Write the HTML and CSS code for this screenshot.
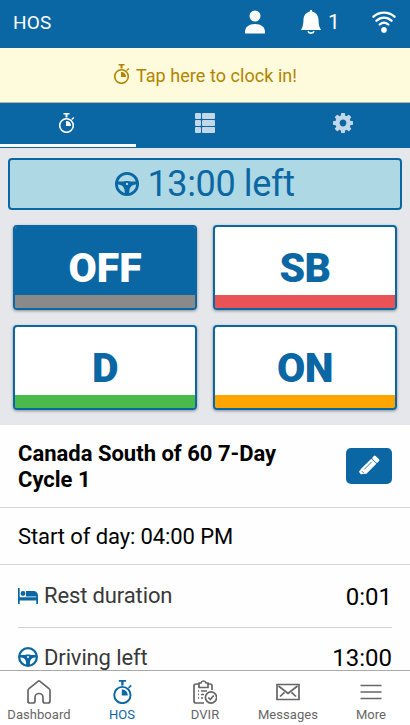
FILE: index.html
```html
<!DOCTYPE html>
<html lang="en">
<head>
<meta charset="utf-8">
<title>HOS</title>
<link rel="stylesheet" href="styles.css">
</head>
<body>
<svg class="defs" aria-hidden="true">
  <symbol id="stopwatch" viewBox="0 0 18 20">
    <circle cx="8.500" cy="12.500" r="6.800" fill="none" stroke="currentColor" stroke-width="1.600"/>
    <path d="M5.500 0h6v1.500h-2v3h-2v-3h-2zM13.200 6l2.200-2 .9 1-2.200 2zM8 8a4.500 4.500 0 0 1 5 5H8z" fill="currentColor"/>
  </symbol>
  <symbol id="wheel" viewBox="0 0 24 24">
    <circle cx="12" cy="12" r="10.600" fill="none" stroke="currentColor" stroke-width="2.800"/>
    <path fill="currentColor" fill-rule="evenodd" d="M2 9.500h6.500C9.500 8.800 14.500 8.800 15.500 9.500H22v2.700l-3.500.8c-2.500.8-4 3-4.200 6V22H9.700v-3c-.2-3-1.700-5.200-4.200-6L2 12.200zM12 10.700a1.200 1.200 0 1 0 0 2.400 1.200 1.200 0 0 0 0-2.400z"/>
  </symbol>
</svg>
<div class="app">
  <header class="topbar">
    <span class="title">HOS</span>
    <svg class="person" viewBox="0 0 20 24" fill="#fff"><circle cx="10" cy="6" r="5.5"/><path d="M0 23.500V22c0-5 4-8 10-8s10 3 10 8v1.500z"/></svg>
    <span class="alerts">
      <svg class="bell" viewBox="0 0 20 24" fill="#fff"><path d="M10 0c.9 0 1.300.6 1.300 1.700C15 2.400 17.300 5.400 17.500 9.500c.2 4.500.5 6.500 1.500 8.500l1 2H0L1 18c1-2 1.300-4 1.500-8.500.2-4.100 2.500-7.100 6.200-7.800C8.700.6 9.100 0 10 0z"/><path d="M7 21.200c.7 2.500 5.300 2.500 6 0" fill="none" stroke="#fff" stroke-width="1.600"/></svg>
      <span>1</span>
    </span>
    <svg class="wifi" viewBox="0 0 24 22" fill="none" stroke="#fff" stroke-width="2.300" stroke-linecap="round"><path d="M1.500 5.700c6-5.400 15-5.400 21 0M4.500 9.700c4.500-4.100 10.500-4.100 15 0M7.700 13.500c2.700-2.400 5.900-2.400 8.600 0"/><circle cx="12" cy="18.900" r="2.800" fill="#fff" stroke="none"/></svg>
  </header>

  <div class="clockin"><svg><use href="#stopwatch"/></svg><span>Tap here to clock in!</span></div>

  <nav class="tabs">
    <div class="tab active"><svg class="tab-watch"><use href="#stopwatch"/></svg></div>
    <div class="tab"><svg class="tab-list" viewBox="0 0 20 20" fill="currentColor"><rect width="6" height="6" rx="1"/><rect y="7" width="6" height="6" rx="1"/><rect y="14" width="6" height="6" rx="1"/><rect x="7" width="13" height="6" rx="1"/><rect x="7" y="7" width="13" height="6" rx="1"/><rect x="7" y="14" width="13" height="6" rx="1"/></svg></div>
    <div class="tab"><svg class="tab-gear" viewBox="-10 -10 20 20"><circle r="5.600" fill="none" stroke="currentColor" stroke-width="4.400"/><g fill="currentColor"><rect x="-2" y="-10" width="4" height="4" rx=".7"/><rect x="-2" y="6" width="4" height="4" rx=".7"/><rect x="-10" y="-2" width="4" height="4" rx=".7"/><rect x="6" y="-2" width="4" height="4" rx=".7"/><g transform="rotate(45)"><rect x="-2" y="-10" width="4" height="4" rx=".7"/><rect x="-2" y="6" width="4" height="4" rx=".7"/><rect x="-10" y="-2" width="4" height="4" rx=".7"/><rect x="6" y="-2" width="4" height="4" rx=".7"/></g></g></svg></div>
  </nav>

  <section class="status">
    <div class="remaining"><svg><use href="#wheel"/></svg><span>13:00 left</span></div>
    <div class="duties">
      <button class="duty off">OFF</button>
      <button class="duty sb">SB</button>
      <button class="duty d">D</button>
      <button class="duty on">ON</button>
    </div>
  </section>

  <main class="details">
    <div class="cycle">
      <h1>Canada South of 60 7-Day Cycle 1</h1>
      <button class="edit" aria-label="Edit"><svg viewBox="0 0 22 22"><g transform="translate(10.500 11.500) rotate(45)"><path d="M-3.600-7.500V6.500L-3 10.500 0 11 3.600 6.500v-14z" fill="#fff"/><rect x="-3.600" y="-12.500" width="7.200" height="4.300" rx="1.200" fill="#fff"/><path d="M-1-5.500V5M-1.500 8h3" stroke="#0b67a4" stroke-width=".8"/></g></svg></button>
    </div>
    <div class="start">Start of day: 04:00 PM</div>
    <div class="timers">
      <div class="timer">
        <svg class="bed" viewBox="0 0 20 16" fill="currentColor"><path d="M0 0h1.700v9.300h16.600V8H20v8h-1.700v-3.500H1.700V16H0z"/><circle cx="5" cy="5.500" r="2.400"/><path d="M8 3h7.500A4.500 4.500 0 0 1 20 7.500v1H8z"/></svg>
        <span class="label">Rest duration</span><span class="value">0:01</span>
      </div>
      <div class="timer">
        <svg class="wheel"><use href="#wheel"/></svg>
        <span class="label">Driving left</span><span class="value">13:00</span>
      </div>
    </div>
  </main>

  <nav class="bottom">
    <div class="item dashboard"><svg viewBox="0 0 24 24" class="icon"><path d="M1 23V10.500Q1 9.500 2 8.700L11 1.300q1-.8 2 0l9 7.400q1 .8 1 1.800V21q0 2-2 2h-3q-2 0-2-2v-3.500a4 4 0 0 0-8 0V21q0 2-2 2H3q-2 0-2-2"/></svg><span>Dashboard</span></div>
    <div class="item current"><svg class="icon"><use href="#stopwatch"/></svg><span>HOS</span></div>
    <div class="item"><svg viewBox="0 0 24 24" class="icon"><path d="M11 23H3q-2 0-2-2V6q0-2 2-2h3V3h2q.5-2 2.500-2T13 3h2v1h2q2 0 2 2v4M6 4v3.500h9V4M5 11h1m2 0h6M5 14.500h1m2 0h3M5 18h1m2 0h2"/><circle cx="18" cy="17.500" r="5.600"/><path d="m15.300 17.500 2 2 3.400-4"/></svg><span>DVIR</span></div>
    <div class="item"><svg viewBox="0 0 24 24" class="icon"><path d="M1 4.500h22v15H1zM2.500 6l9.500 7.500L21.500 6M4 16.500l4.500-4.200M20 16.500l-4.500-4.200"/></svg><span>Messages</span></div>
    <div class="item"><svg viewBox="0 0 24 24" class="icon"><path d="M1.500 5.500h21M1.500 12h21M1.500 18.500h21"/></svg><span>More</span></div>
  </nav>
</div>
</body>
</html>
```
FILE: styles.css
```css
* { box-sizing: border-box; }
body { margin: 0; font-family: Roboto, "Liberation Sans", sans-serif; color: #000; }
svg { display: block; flex: none; }
button { font-family: inherit; padding: 0; }
.defs { display: none; }
.app { width: 410px; height: 725px; overflow: hidden; display: flex; flex-direction: column; background: #fefefe; }

.topbar { height: 48px; flex: none; display: flex; align-items: center; background: #0b67a4; color: #fff; padding: 0 14px 4px 13px; font-size: 21px; }
.title { font-size: 19px; letter-spacing: .2px; margin-right: auto; }
.person { width: 20px; height: 24px; }
.alerts { display: flex; align-items: center; gap: 7px; margin-left: 36px; }
.alerts span { width: 12px; }
.bell { width: 20px; height: 24px; }
.wifi { width: 24px; height: 22px; margin-left: 32px; }

.clockin { height: 55px; flex: none; display: flex; justify-content: center; align-items: center; gap: 5px; background: #fefadc; border-bottom: 1px solid #b9b6a8; color: #b08500; font-size: 18px; letter-spacing: .05px; }
.clockin svg { width: 18px; height: 20px; margin-bottom: 3px; }

.tabs { height: 45px; flex: none; display: grid; grid-template-columns: repeat(3, 138px); justify-content: center; background: #0b67a4; padding-bottom: 1px; color: #c2d8e8; }
.tab { display: flex; justify-content: center; padding-top: 10px; border-bottom: 3px solid transparent; }
.tab.active { color: #fff; border-color: #fff; }
.tab-watch { width: 18px; height: 20px; }
.tab-list, .tab-gear { width: 20px; height: 20px; }

.status { height: 277px; flex: none; padding: 10px 8px 0; background: #e6e7eb; }
.remaining { height: 52px; display: flex; align-items: center; justify-content: center; gap: 8px; border: 2px solid #0b67a4; border-radius: 4px; background: #add8e4; color: #0b67a4; font-size: 36px; letter-spacing: -.35px; }
.remaining svg { width: 24px; height: 24px; }
.duties { display: grid; grid-template-columns: 184px 184px; gap: 15px 16px; padding: 15px 5px 0; }
.duty { height: 85px; border: 2px solid #0b67a4; border-radius: 4px; color: #0b67a4; font-size: 41px; font-weight: 900; line-height: 83px; letter-spacing: -.6px; text-align: center; box-shadow: 0 1px 3px rgba(0,0,0,.4); }
.off { color: #fff; letter-spacing: 0; background: linear-gradient(#0b67a4 68px, #8a8a8a 68px) padding-box; }
.sb { background: linear-gradient(#fff 68px, #e95355 68px) padding-box; }
.d { background: linear-gradient(#fff 68px, #4aba4a 68px) padding-box; }
.on { background: linear-gradient(#fff 68px, #ffa500 68px) padding-box; }

.details { flex: 1; min-height: 0; overflow: hidden; }
.cycle { height: 83px; border-bottom: 1px solid #d6d6d6; padding: 0 18px; display: flex; align-items: center; justify-content: space-between; }
.cycle h1 { margin: 2px 0 0; width: 290px; font-size: 22px; line-height: 26px; font-weight: 700; }
.edit { width: 46px; height: 36px; border: 0; border-radius: 5px; background: #0b67a4; display: flex; align-items: center; justify-content: center; }
.edit svg { width: 22px; height: 22px; overflow: visible; }
.start { height: 57px; border-bottom: 1px solid #d6d6d6; padding-left: 18px; font-size: 22px; letter-spacing: -.1px; line-height: 57px; }
.timers { padding: 0 18px; }
.timer { height: 63px; display: flex; align-items: center; border-bottom: 1px solid #d2d2d2; padding-bottom: 1px; color: #0b67a4; font-size: 22px; }
.timer + .timer { padding-bottom: 4px; }
.bed { width: 20px; height: 16px; }
.wheel { width: 20px; height: 20px; }
.label { margin-left: 6px; color: #393939; letter-spacing: -.13px; }
.value { margin-left: auto; padding-top: 2px; color: #000; font-size: 24px; line-height: 22px; }

.bottom { height: 55px; flex: none; display: grid; grid-template-columns: repeat(5, 83px); justify-content: center; border-top: 1px solid #aaa; background: #fff; color: #666; }
.item { display: flex; flex-direction: column; align-items: center; padding-top: 9px; font-size: 13px; line-height: 15px; gap: 3px; }
.item span { letter-spacing: .05px; }
.icon { width: 24px; height: 24px; fill: none; stroke: currentColor; stroke-width: 1.700; }
.current { color: #0b67a4; }
.current .icon { stroke: none; margin-left: 1px; }
```
